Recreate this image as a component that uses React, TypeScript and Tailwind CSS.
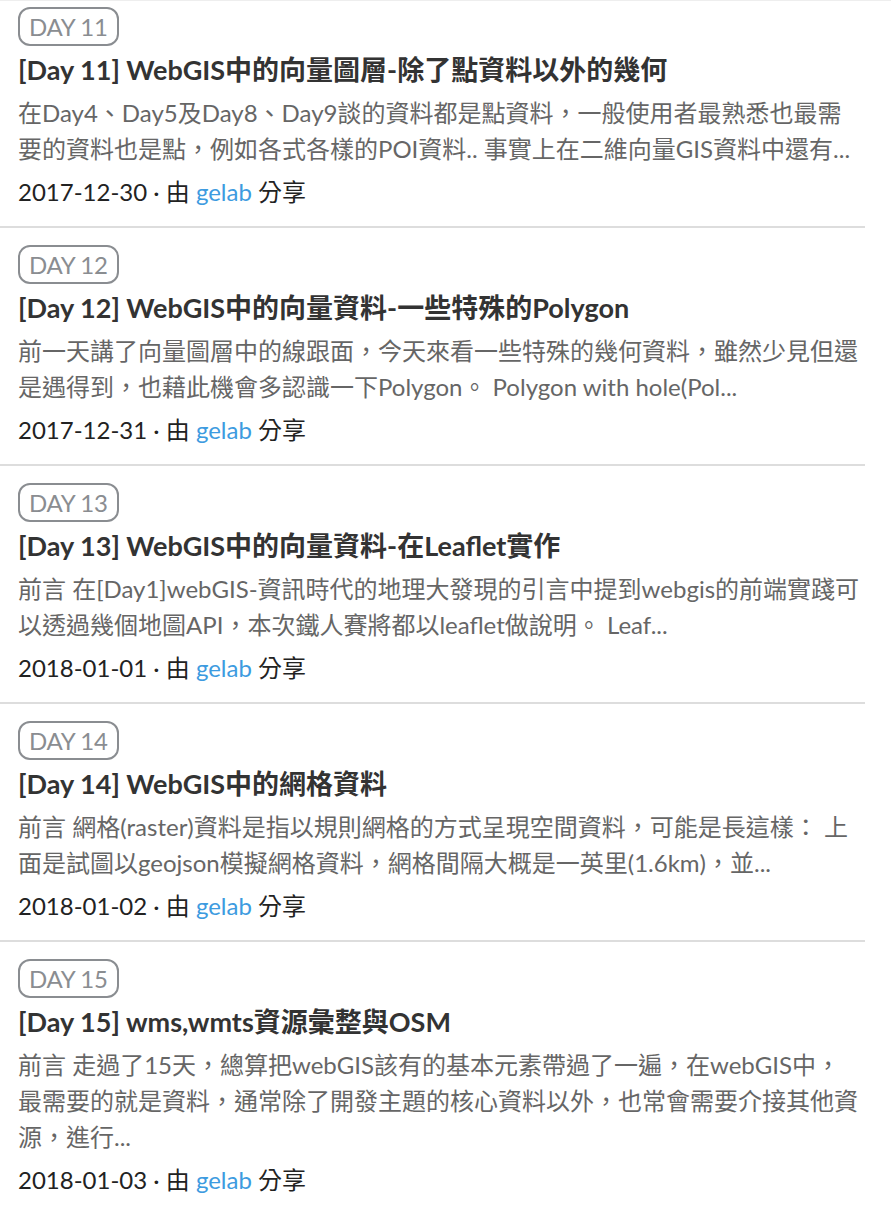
const posts = [
  {
    day: 11,
    title: '[Day 11] WebGIS中的向量圖層-除了點資料以外的幾何',
    excerpt: [
      '在Day4、Day5及Day8、Day9談的資料都是點資料，一般使用者最熟悉也最需',
      '要的資料也是點，例如各式各樣的POI資料.. 事實上在二維向量GIS資料中還有...',
    ],
    date: '2017-12-30',
  },
  {
    day: 12,
    title: '[Day 12] WebGIS中的向量資料-一些特殊的Polygon',
    excerpt: [
      '前一天講了向量圖層中的線跟面，今天來看一些特殊的幾何資料，雖然少見但還',
      '是遇得到，也藉此機會多認識一下Polygon。 Polygon with hole(Pol...',
    ],
    date: '2017-12-31',
  },
  {
    day: 13,
    title: '[Day 13] WebGIS中的向量資料-在Leaflet實作',
    excerpt: [
      '前言 在[Day1]webGIS-資訊時代的地理大發現的引言中提到webgis的前端實踐可',
      '以透過幾個地圖API，本次鐵人賽將都以leaflet做說明。 Leaf...',
    ],
    date: '2018-01-01',
  },
  {
    day: 14,
    title: '[Day 14] WebGIS中的網格資料',
    excerpt: [
      '前言 網格(raster)資料是指以規則網格的方式呈現空間資料，可能是長這樣： 上',
      '面是試圖以geojson模擬網格資料，網格間隔大概是一英里(1.6km)，並...',
    ],
    date: '2018-01-02',
  },
  {
    day: 15,
    title: '[Day 15] wms,wmts資源彙整與OSM',
    excerpt: [
      '前言 走過了15天，總算把webGIS該有的基本元素帶過了一遍，在webGIS中，',
      '最需要的就是資料，通常除了開發主題的核心資料以外，也常會需要介接其他資',
      '源，進行...',
    ],
    date: '2018-01-03',
  },
];

export default function App() {
  return (
    <div
      className="min-h-screen bg-white border-t border-[#eeeeee]"
      style={{ fontFamily: 'Lato, "Noto Sans CJK TC", sans-serif' }}
    >
      <ul className="w-[865px]">
        {posts.map((post, i) => (
          <li
            key={post.day}
            className={`pl-[18px] pb-4 border-b-2 border-[#dddddd] ${i === 0 ? 'pt-[6px]' : 'pt-[17px]'}`}
          >
            <span className="inline-flex h-[39px] items-center rounded-[12px] border-2 border-[#8a8d91] px-[9px] text-[24px] tracking-[-0.3px] text-[#8a8d91]">
              DAY {post.day}
            </span>
            <h2 className="mt-[6px] text-[27px] font-bold leading-[36px] text-[#333333]">{post.title}</h2>
            <p className="mt-[7px] text-[24px] leading-[36px] text-[#666666]">
              {post.excerpt.map((line) => (
                <span key={line} className="block whitespace-nowrap">
                  {line}
                </span>
              ))}
            </p>
            <div className="mt-[7px] text-[24px] leading-[36px] text-[#222222]">
              {post.date} · 由 <a className="text-[#3d9be0]">gelab</a> 分享
            </div>
          </li>
        ))}
      </ul>
    </div>
  );
}
